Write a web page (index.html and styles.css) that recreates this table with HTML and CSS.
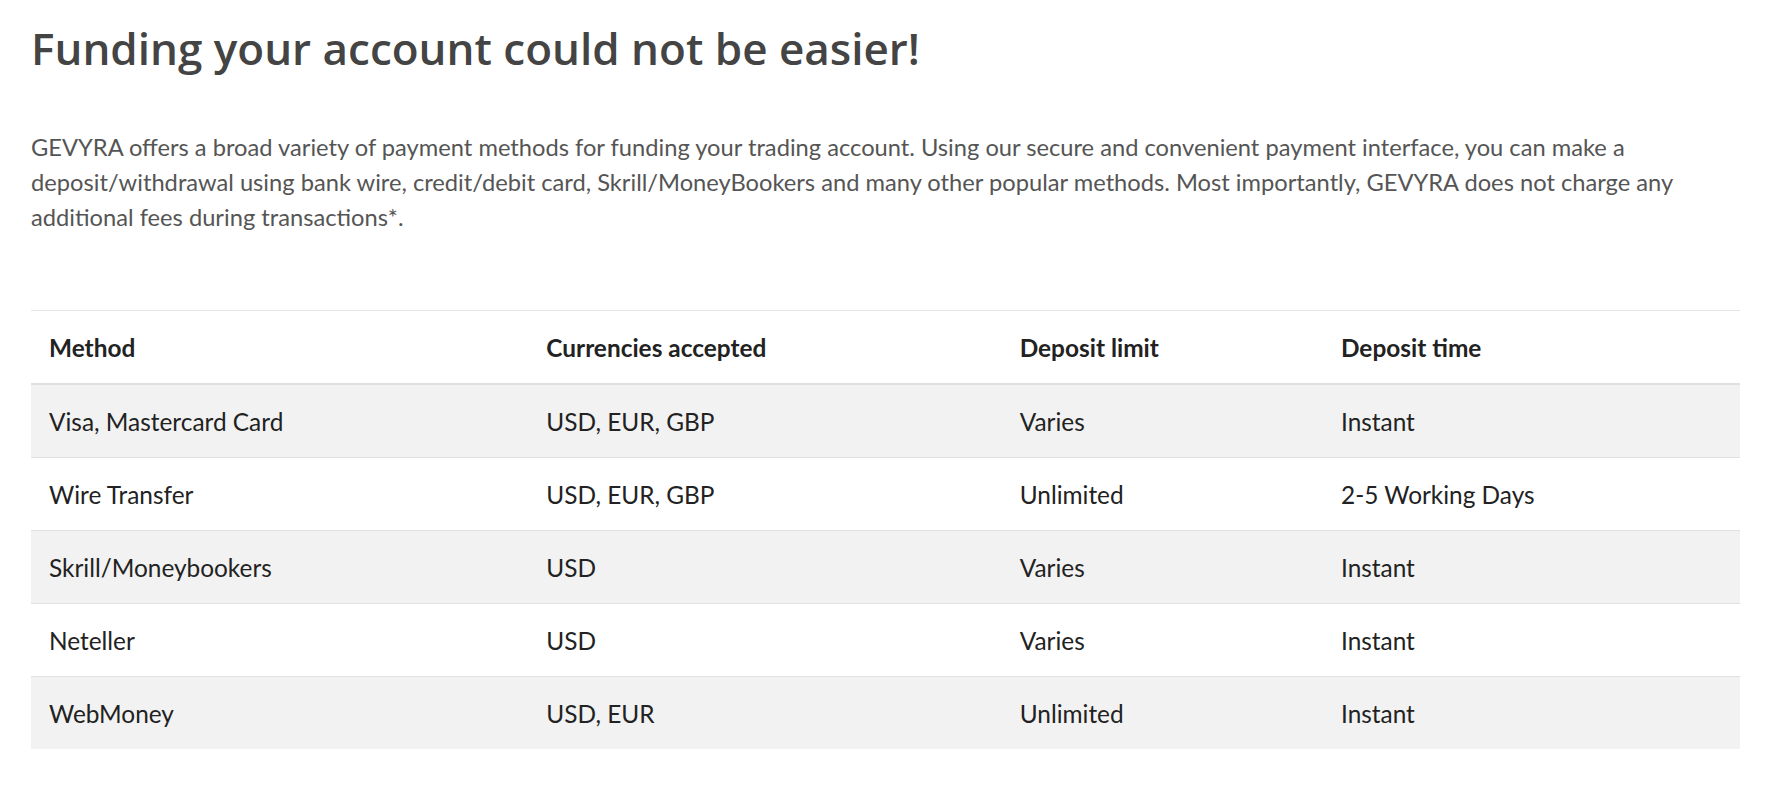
FILE: index.html
```html
<!DOCTYPE html>
<html lang="en">
<head>
  <meta charset="UTF-8">
  <meta name="viewport" content="width=device-width, initial-scale=1.0">
  <title>Funding your account</title>
  <link rel="stylesheet" href="styles.css">
</head>
<body>
  <div class="content">
    <h1>Funding your account could not be easier!</h1>

    <p class="intro">
      GEVYRA offers a broad variety of payment methods for funding your trading account. Using our secure and convenient payment interface, you can make a
      deposit/withdrawal using bank wire, credit/debit card, Skrill/MoneyBookers and many other popular methods. Most importantly, GEVYRA does not charge any
      additional fees during transactions*.
    </p>

    <!-- Zahlungsmethoden -->
    <table class="methods">
      <thead>
        <tr>
          <th class="col-method">Method</th>
          <th class="col-currency">Currencies accepted</th>
          <th class="col-limit">Deposit limit</th>
          <th class="col-time">Deposit time</th>
        </tr>
      </thead>
      <tbody>
        <tr>
          <td>Visa, Mastercard Card</td>
          <td>USD, EUR, GBP</td>
          <td>Varies</td>
          <td>Instant</td>
        </tr>
        <tr>
          <td>Wire Transfer</td>
          <td>USD, EUR, GBP</td>
          <td>Unlimited</td>
          <td>2-5 Working Days</td>
        </tr>
        <tr>
          <td>Skrill/Moneybookers</td>
          <td>USD</td>
          <td>Varies</td>
          <td>Instant</td>
        </tr>
        <tr>
          <td>Neteller</td>
          <td>USD</td>
          <td>Varies</td>
          <td>Instant</td>
        </tr>
        <tr>
          <td>WebMoney</td>
          <td>USD, EUR</td>
          <td>Unlimited</td>
          <td>Instant</td>
        </tr>
      </tbody>
    </table>
  </div>
</body>
</html>
```

FILE: styles.css
```css
body {
  font-family: Lato, "Liberation Sans", sans-serif;
  margin: 0;
  padding: 0;
  background-color: #fff;
  color: #555;
}

.content {
  padding: 20px 43px 0 31px;
}

h1 {
  font-family: "Open Sans", Lato, sans-serif;
  font-weight: 600;
  font-size: 44px;
  line-height: 56px;
  color: #444;
  margin: 0 0 54px 0;
}

.intro {
  font-size: 23.7px;
  line-height: 35px;
  margin: 0 0 75px 0;
}

.methods {
  width: 100%;
  border-collapse: collapse;
  border-top: 1px solid #e6e6e6;
  font-size: 24.4px;
  color: #222;
}

.methods th {
  text-align: left;
  font-weight: 700;
  height: 72px;
  padding: 0 18px;
  border-bottom: 2px solid #dfdfe4;
}

.methods td {
  height: 72px;
  padding: 0 18px;
  border-bottom: 1px solid #e1e1e1;
}

.methods tbody tr:nth-child(odd) {
  background: #f2f2f2;
}

.methods tbody tr:last-child td {
  border-bottom: none;
}

.col-method { width: 29.1%; }
.col-currency { width: 27.7%; }
.col-limit { width: 18.8%; }
.col-time { width: 24.4%; }
```
